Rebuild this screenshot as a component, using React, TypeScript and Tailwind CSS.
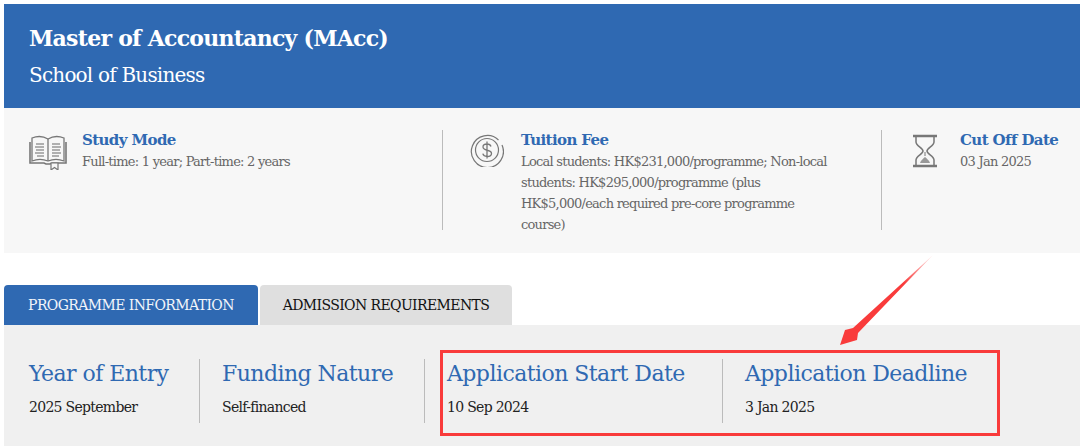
const slab = "font-['DejaVu_Serif',serif]";

const BookIcon = () => (
  <svg width="38" height="36" viewBox="0 0 38 36" fill="none" stroke="#777" className="shrink-0">
    <path d="M3 4c5-2 11-2 16 1 5-3 11-3 16-1v23c-5-2-11-2-16 0-5-2-11-2-16 0z" strokeWidth="1.3" />
    <path d="M19 5v22" strokeWidth="1.3" />
    <path d="M1 8v21h14l2 1h4l2-1h14V8" strokeWidth="1.6" />
    <path d="M7 10h8M6 13h9M7 16h8M6 19h9M8 22h7M23 10h8M23 13h9M23 16h8M23 19h9M23 22h7" strokeWidth="1.3" stroke="#999" />
    <path d="M22 29h7v7l-3.5-2.5L22 36z" strokeWidth="1.2" fill="#f7f7f7" />
  </svg>
);

const CoinIcon = () => (
  <svg width="34" height="34" viewBox="0 0 34 34" fill="none" stroke="#777" className="shrink-0">
    <path d="M28.5 7A16 16 0 1 0 32 12" strokeWidth="1.2" />
    <circle cx="17" cy="17" r="11.5" strokeWidth="1.2" />
    <path d="M21 13.5c-.5-1.7-2-2.5-4-2.5-2.300 0-4 1.200-4 3 0 4.500 8.500 2 8.500 6.500 0 1.800-1.800 3-4.300 3-2.200 0-3.900-1-4.400-2.800M17 8.500v17" strokeWidth="1.3" />
  </svg>
);

const HourglassIcon = () => (
  <svg width="26" height="34" viewBox="0 0 26 34" fill="none" stroke="#777" className="shrink-0">
    <path d="M1 2h24M1 32h24" strokeWidth="2.400" />
    <path d="M4 3v5c0 4 7 6 7 9s-7 5-7 9v5M22 3v5c0 4-7 6-7 9s7 5 7 9v5" strokeWidth="1.500" />
    <path d="M8 29c1-3 3-4 5-6 2 2 4 3 5 6z" fill="#999" stroke="none" />
    <path d="M13 18v4" strokeWidth="1" />
  </svg>
);

const InfoCell = ({ icon, title, children, iconBox }: { icon: React.ReactNode; title: string; children: React.ReactNode; iconBox: string }) => (
  <div className="flex gap-0">
    <div className={`flex justify-center ${iconBox}`}>{icon}</div>
    <div>
      <div className="text-[15px] leading-[20px] font-bold tracking-[-0.6px] text-[#2f69b2]">{title}</div>
      <div className="mt-[1px] text-[13px] leading-[21px] tracking-[-0.75px] text-[#666]">{children}</div>
    </div>
  </div>
);

const Stat = ({ label, value, className }: { label: string; value: string; className: string }) => (
  <div className={className}>
    <div className="text-[22px] leading-[30px] tracking-[-0.55px] whitespace-nowrap text-[#2f69b2]">{label}</div>
    <div className="mt-[8px] text-[14px] leading-[20px] tracking-[-0.7px] whitespace-nowrap text-[#222]">{value}</div>
  </div>
);

export default function App() {
  return (
    <div className={`relative h-[446px] w-[1080px] overflow-hidden bg-white pt-[4px] pl-[4px] ${slab}`}>
      <div className="h-[104px] bg-[#2f69b2] pt-[18px] pl-[25px] text-white">
        <h1 className="text-[22px] leading-[32px] font-bold tracking-[-0.75px]">Master of Accountancy (MAcc)</h1>
        <p className="mt-[7px] text-[20px] leading-[28px] tracking-[-0.8px]">School of Business</p>
      </div>

      <div className="flex h-[145px] bg-[#f7f7f7] pt-[22px]">
        <div className="h-[100px] w-[439px] border-r border-[#bbb] pt-[0px] pl-[25px]">
          <InfoCell icon={<BookIcon />} title="Study Mode" iconBox="w-[53px] pt-[4px] justify-start">
            Full-time: 1 year; Part-time: 2 years
          </InfoCell>
        </div>
        <div className="h-[100px] w-[439px] border-r border-[#bbb] pl-[27px]">
          <InfoCell icon={<CoinIcon />} title="Tuition Fee" iconBox="w-[51px] pt-[3px] justify-start">
            Local students: HK$231,000/programme; Non-local
            <br />
            students: HK$295,000/programme (plus
            <br />
            HK$5,000/each required pre-core programme
            <br />
            course)
          </InfoCell>
        </div>
        <div className="pl-[30px]">
          <InfoCell icon={<HourglassIcon />} title="Cut Off Date" iconBox="w-[48px] pt-[4px] justify-start">
            03 Jan 2025
          </InfoCell>
        </div>
      </div>

      <div className="mt-[32px] flex h-[40px] text-[14px] tracking-[-0.6px]">
        <div className="flex w-[254px] items-center justify-center rounded-t-[4px] bg-[#2f69b2] text-[#f2f5fa]">PROGRAMME INFORMATION</div>
        <div className="ml-[2px] flex w-[252px] items-center justify-center rounded-t-[4px] bg-[#dfdfdf] text-[#111]">ADMISSION REQUIREMENTS</div>
      </div>

      <div className="flex h-[121px] items-start bg-[#f0f0f0] pt-[34px] pl-[25px]">
        <Stat label="Year of Entry" value="2025 September" className="h-[64px] w-[171px] border-r border-[#bbb]" />
        <Stat label="Funding Nature" value="Self-financed" className="h-[64px] w-[225px] border-r border-[#bbb] pl-[22px]" />
        <Stat label="Application Start Date" value="10 Sep 2024" className="h-[64px] w-[298px] border-r border-[#bbb] pl-[22px]" />
        <Stat label="Application Deadline" value="3 Jan 2025" className="h-[64px] pl-[22px]" />
      </div>

      {/* annotation laid over the page */}
      <div className="absolute top-[350px] left-[440px] h-[86px] w-[560px] border-[3px] border-[#f93b3b]" />
      <svg className="absolute top-[250px] left-[830px]" width="110" height="100" viewBox="830 250 110 100">
        <defs>
          <linearGradient id="tail" x1="933" y1="255" x2="850" y2="335" gradientUnits="userSpaceOnUse">
            <stop offset="0" stopColor="#f93b3b" stopOpacity="0.1" />
            <stop offset="0.35" stopColor="#f93b3b" />
          </linearGradient>
        </defs>
        <path d="M933 255 858 333 857 340 840 345 845 330 853 328z" fill="url(#tail)" />
      </svg>
    </div>
  );
}
